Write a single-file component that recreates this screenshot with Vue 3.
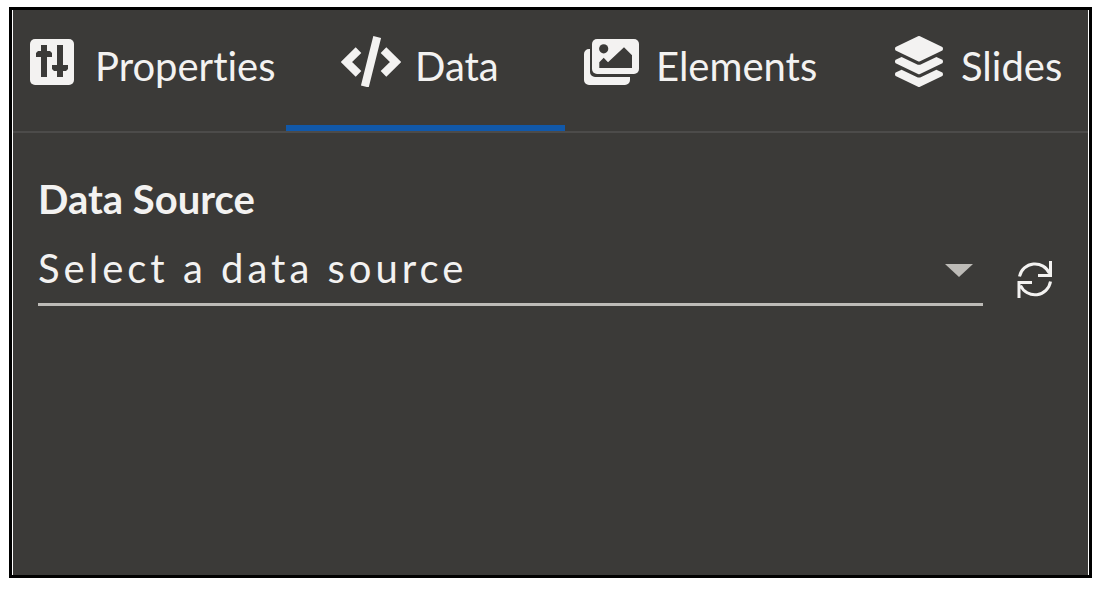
<template>
  <main class="panel">
    <div class="panel-body">
      <nav class="tabs" role="tablist" aria-label="Editor sections">
        <button
          v-for="tab in tabs"
          :key="tab.id"
          type="button"
          role="tab"
          class="tab"
          :class="[`tab-${tab.id}`, { active: activeTab === tab.id }]"
          :aria-selected="activeTab === tab.id"
          @click="activeTab = tab.id"
        >
          <svg v-if="tab.id === 'properties'" class="tab-icon" width="45" height="51" viewBox="0 0 45 51" aria-hidden="true">
            <rect y="3" width="44" height="46" rx="5" fill="currentColor" />
            <path class="cutout" d="M11 9h6v6h3l2 2v4h-5v20h-6V21H6v-4l2-2h3zM27 9h6v20h5v4l-2 2h-3v6h-6v-6h-3l-2-2v-4h5z" />
          </svg>
          <svg v-else-if="tab.id === 'data'" class="tab-icon" width="60" height="51" viewBox="0 0 60 51" fill="none" stroke="currentColor" aria-hidden="true">
            <path d="M17.5 14.2 5.5 26l12 11.8M42.5 14.2l12 11.8-12 11.8" stroke-width="8" />
            <path d="M36.2 1 23.8 50.5" stroke-width="8" />
          </svg>
          <svg v-else-if="tab.id === 'elements'" class="tab-icon" width="56" height="51" viewBox="0 0 56 51" fill="currentColor" aria-hidden="true">
            <path d="M5 13H6V36a5 5 0 0 0 5 5H46v3a5 5 0 0 1-5 5H5a5 5 0 0 1-5-5V18a5 5 0 0 1 5-5z" />
            <rect x="8" y="3" width="47" height="35" rx="5" />
            <circle class="cutout" cx="19.7" cy="12.8" r="4.6" />
            <path class="cutout" d="M15.3 32v-5.7l4.4-4.6 4.3 4.6 16-15 8 8V32z" />
          </svg>
          <svg v-else class="tab-icon" width="48" height="51" viewBox="0 0 512 512" preserveAspectRatio="none" fill="currentColor" aria-hidden="true">
            <path d="M12.4 148 245.4 253.7c6.8 3.1 14.4 3.1 21.2 0L499.6 148c16.5-7.5 16.5-32.5 0-40L266.6 2.3a25.6 25.6 0 0 0-21.2 0L12.4 108c-16.5 7.5-16.5 32.5 0 40z" />
            <path d="m499.6 236.3-58.1-26.3-161.6 73.2a57 57 0 0 1-47.8 0L70.5 210l-58.1 26.3c-16.5 7.5-16.5 32.5 0 40l233 105.6c6.8 3.1 14.4 3.1 21.2 0l233-105.6c16.5-7.5 16.5-32.5 0-40z" />
            <path d="m499.6 364.1-57.9-26.2-161.8 73.3a57 57 0 0 1-47.8 0L70.3 337.9l-57.9 26.2c-16.5 7.5-16.5 32.5 0 40l233 105.6c6.8 3.1 14.4 3.1 21.2 0l233-105.6c16.5-7.5 16.5-32.5 0-40z" />
          </svg>
          <span>{{ tab.label }}</span>
        </button>
      </nav>

      <section class="content">
        <label class="field-label" for="data-source">Data Source</label>
        <div class="field-row">
          <div class="select-wrap">
            <select id="data-source" v-model="source">
              <option value="">Select a data source</option>
            </select>
            <svg class="caret" width="28" height="13" viewBox="0 0 28 13" aria-hidden="true">
              <path d="M0 0h28L14 13z" fill="currentColor" />
            </svg>
          </div>
          <button type="button" class="refresh" aria-label="Refresh data sources" @click="source = ''">
            <svg width="36" height="37" viewBox="0 0 36 37" fill="none" stroke="currentColor" stroke-width="3" aria-hidden="true">
              <path d="M2.5 15.5A15.8 15.8 0 0 1 32.5 12.5M33.5 0v14.5H21" />
              <path d="M33.5 20.5A15.8 15.8 0 0 1 3.5 24.5M2 37V21.5h13" />
            </svg>
          </button>
        </div>
      </section>
    </div>
  </main>
</template>

<script setup>
import { ref } from 'vue'

const tabs = [
  { id: 'properties', label: 'Properties' },
  { id: 'data', label: 'Data' },
  { id: 'elements', label: 'Elements' },
  { id: 'slides', label: 'Slides' }
]

const activeTab = ref('data')
const source = ref('')
</script>

<style>
body {
  margin: 0;
  background: #fff;
}
</style>

<style scoped>
.panel {
  display: flex;
  box-sizing: border-box;
  min-height: calc(100vh - 18px);
  margin: 7px 9px 11px;
  border: 3px solid #000;
  background: #3b3a38;
  color: #f3f2f1;
  font-family: 'Century Gothic', Lato, sans-serif;
}

.panel-body {
  flex: 1;
  min-width: 0;
  border: solid #fff;
  border-width: 0 1px;
}

button,
select {
  padding: 0;
  border: 0;
  border-radius: 0;
  background: transparent;
  color: inherit;
  font-family: inherit;
  font-variant-ligatures: none;
}

.tabs {
  display: grid;
  grid-template-columns: 273fr 279fr 273fr 250fr;
  border-bottom: 2px solid #4c4b4a;
}

.tab {
  display: flex;
  align-items: flex-start;
  box-sizing: border-box;
  min-width: 0;
  padding: 26px 0 35px;
  border-bottom: 6px solid transparent;
  font-size: 40px;
  white-space: nowrap;
  cursor: pointer;
}

.tab span {
  padding-top: 6px;
  line-height: 48px;
}

.tab.active {
  border-bottom-color: #1158a9;
}

.tab-properties {
  gap: 20px;
  padding-left: 17px;
}

.tab-data {
  gap: 14px;
  padding-left: 55px;
}

.tab-elements {
  gap: 16px;
  padding-left: 19px;
}

.tab-slides {
  gap: 18px;
  padding-left: 57px;
}

.tab-icon {
  flex: none;
}

.cutout {
  fill: #3b3a38;
}

.content {
  padding: 42px 35px 0 25px;
}

.field-label {
  display: block;
  font-size: 40px;
  font-weight: 700;
  line-height: 48px;
}

.field-row {
  display: flex;
  align-items: flex-end;
  gap: 34px;
  margin-top: 21px;
}

.select-wrap {
  display: grid;
  flex: 1;
  align-items: center;
  min-width: 0;
  border-bottom: 3px solid #bdbbb7;
}

.select-wrap > * {
  grid-area: 1 / 1;
}

select {
  appearance: none;
  width: 100%;
  height: 59px;
  padding-bottom: 16px;
  outline: 0;
  font-size: 40px;
  letter-spacing: 4px;
}

.caret {
  justify-self: end;
  margin: 0 10px 6px 0;
  color: #bdbbb7;
  pointer-events: none;
}

.refresh {
  display: flex;
  padding-bottom: 8px;
  cursor: pointer;
}
</style>
